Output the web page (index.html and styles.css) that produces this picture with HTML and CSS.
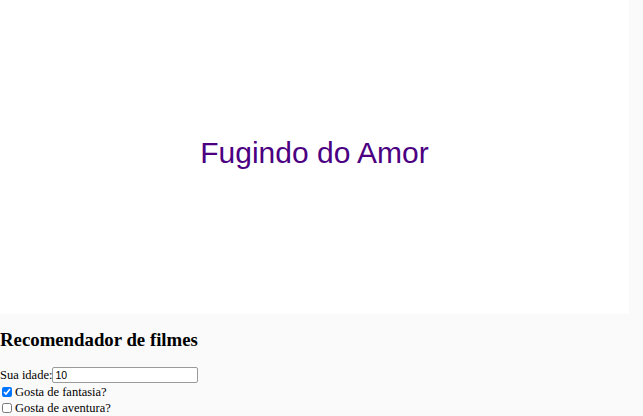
FILE: index.html
```html
<!DOCTYPE html>
<html lang="pt-BR">
<head>
<meta charset="utf-8">
<title>Recomendador de filmes</title>
<link rel="stylesheet" href="styles.css">
</head>
<body>
  <div class="poster">
    <p class="title">Fugindo do Amor</p>
  </div>
  <main class="form">
    <h2 class="heading">Recomendador de filmes</h2>
    <div class="row">
      <label for="idade">Sua idade:</label><input id="idade" class="age" type="text" value="10">
    </div>
    <div class="row">
      <input id="fantasia" class="check" type="checkbox" checked><label for="fantasia">Gosta de fantasia?</label>
    </div>
    <div class="row">
      <input id="aventura" class="check" type="checkbox"><label for="aventura">Gosta de aventura?</label>
    </div>
  </main>
</body>
</html>
```

FILE: styles.css
```css
html, body {
  margin: 0;
  padding: 0;
}
body {
  background: #fafafa;
  font-family: "Liberation Serif", "Times New Roman", serif;
  font-size: 12.5px;
  color: #000;
  height: 416px;
  overflow: hidden;
}
.poster {
  width: 629px;
  height: 314px;
  background: #fff;
  display: flex;
  align-items: center;
  justify-content: center;
}
.title {
  margin: 0 0 8px 0;
  font-family: "Liberation Sans", Arial, sans-serif;
  font-size: 30px;
  color: #4b0082;
}
.heading {
  margin: 15px 0 16px 0;
  font-size: 18.8px;
  font-weight: bold;
  line-height: 22px;
}
.row {
  display: flex;
  align-items: center;
  height: 16px;
  line-height: 16px;
}
.row + .row {
  margin-top: 0.5px;
}
.age {
  box-sizing: border-box;
  width: 146px;
  height: 16px;
  margin: 0;
  padding: 0 2px;
  font-family: "Liberation Sans", Arial, sans-serif;
  font-size: 10.5px;
  border: 1px solid #9a9a9a;
  border-radius: 2px;
  background: #fff;
}
.check {
  width: 10px;
  height: 10px;
  margin: 0 3px 0 2px;
}
```
